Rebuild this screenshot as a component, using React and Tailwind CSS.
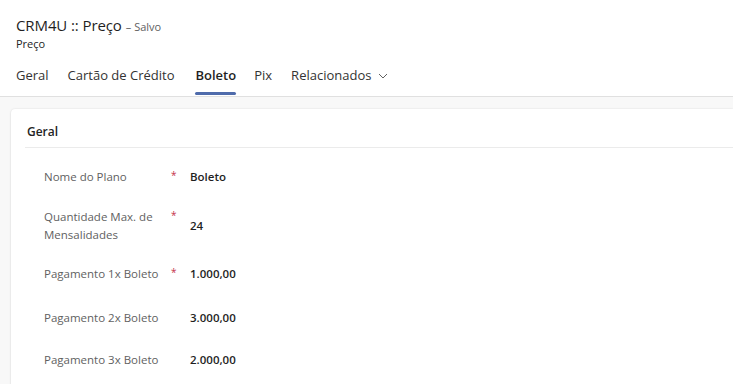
import React from "react";

const tabs = [
    { name: "Geral", gap: "mr-[19px]" },
    { name: "Cartão de Crédito", gap: "mr-[21px]" },
    { name: "Boleto", gap: "mr-[18px]" },
    { name: "Pix", gap: "mr-[19px]" },
];

const rows = [
    { label: ["Nome do Plano"], value: "Boleto", required: true, h: "h-[48px]" },
    { label: ["Quantidade Max. de", "Mensalidades"], value: "24", required: true, h: "h-[50px]" },
    { label: ["Pagamento 1x Boleto"], value: "1.000,00", required: true, h: "h-[46px]" },
    { label: ["Pagamento 2x Boleto"], value: "3.000,00", required: false, h: "h-[42px]" },
    { label: ["Pagamento 3x Boleto"], value: "2.000,00", required: false, h: "h-[42px]" },
];

function App() {
    return (
        <div className="w-[733px] h-[384px] overflow-hidden bg-[#f8f8f8] font-['Open_Sans',sans-serif] text-[#242424]">
            <header className="bg-white border-b border-[#e0e0e0] px-4 pt-[14px]">
                <div className="flex items-baseline">
                    <h1 className="text-[15px] leading-[22px] tracking-[-0.1px] text-[#1f1f1f]">CRM4U :: Preço</h1>
                    <span className="ml-1 text-[11px] text-[#616161]">– Salvo</span>
                </div>
                <div className="text-[11px] leading-[14px] text-[#242424] mt-[1px]">Preço</div>
                <nav className="flex items-center mt-[5px] h-[40px]">
                    {tabs.map((t) => (
                        <div key={t.name} className={`relative h-full flex items-center ${t.gap}`}>
                            <span className={`text-[13px] ${t.name === "Boleto" ? "font-semibold text-[#1f1f1f]" : "text-[#333333]"}`}>{t.name}</span>
                            {t.name === "Boleto" && (
                                <div className="absolute left-0 right-0 bottom-[1px] h-[3px] rounded-full bg-[#4f6bab]" />
                            )}
                        </div>
                    ))}
                    <div className="flex items-center h-full">
                        <span className="text-[13px] text-[#333333]">Relacionados</span>
                        <svg className="w-[10px] h-[10px] ml-[7px] text-[#616161]" viewBox="0 0 10 10" fill="none" stroke="currentColor" strokeWidth="1">
                            <path d="M1 3l4 4 4-4" />
                        </svg>
                    </div>
                </nav>
            </header>

            <main className="pl-[11px] pt-[12px]">
                <section className="bg-white rounded-tl-[4px] shadow-[0_0_2px_rgba(0,0,0,0.12),0_1px_2px_rgba(0,0,0,0.08)] h-[300px]">
                    <div className="px-4 pt-[15px] pb-[7px]">
                        <h2 className="text-[12px] leading-[16px] font-semibold text-[#242424]">Geral</h2>
                    </div>
                    <div className="ml-[14px] border-t border-[#ebebeb]" />
                    <div className="pl-[33px] pt-[5px]">
                        {rows.map((r, i) => (
                            <div key={i} className={`flex items-center ${r.h}`}>
                                <div className="flex items-start w-[146px]">
                                    <div className="w-[127px] text-[11.5px] leading-[18px] text-[#616161]">
                                        {r.label.map((l) => (
                                            <div key={l}>{l}</div>
                                        ))}
                                    </div>
                                    {r.required && (
                                        <span className="text-[10px] leading-[14px] text-[#c4314b]">*</span>
                                    )}
                                </div>
                                <div className="text-[11.5px] font-semibold text-[#1f1f1f]">{r.value}</div>
                            </div>
                        ))}
                    </div>
                </section>
            </main>
        </div>
    );
}

export default App;
